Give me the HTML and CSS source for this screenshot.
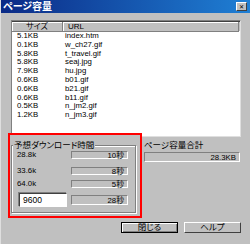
FILE: index.html
```
<!DOCTYPE html>
<html lang="ja">

<head>
    <meta charset="UTF-8">
    <title>ページ容量</title>
    <link rel="stylesheet" href="styles.css">
</head>

<body>
    <div class="dialog">
        <!-- タイトルバー -->
        <div class="titlebar">
            <span class="title">ページ容量</span>
            <span class="close-btn">&#x2715;</span>
        </div>

        <!-- ファイル一覧 -->
        <div class="list">
            <div class="list-head">
                <div class="head-cell size-col">サイズ</div>
                <div class="head-cell url-col">URL</div>
            </div>
            <div class="list-body">
                <div class="row"><span class="size-col">5.1KB</span><span>index.htm</span></div>
                <div class="row"><span class="size-col">0.1KB</span><span>w_ch27.gif</span></div>
                <div class="row"><span class="size-col">5.8KB</span><span>t_travel.gif</span></div>
                <div class="row"><span class="size-col">5.8KB</span><span>seaj.jpg</span></div>
                <div class="row"><span class="size-col">7.9KB</span><span>hu.jpg</span></div>
                <div class="row"><span class="size-col">0.6KB</span><span>b01.gif</span></div>
                <div class="row"><span class="size-col">0.6KB</span><span>b21.gif</span></div>
                <div class="row"><span class="size-col">0.6KB</span><span>b11.gif</span></div>
                <div class="row"><span class="size-col">0.5KB</span><span>n_jm2.gif</span></div>
                <div class="row"><span class="size-col">1.2KB</span><span>n_jm3.gif</span></div>
            </div>
        </div>

        <div class="lower">
            <!-- 赤枠 (注釈) -->
            <div class="mark"></div>

            <div class="group">
                <div class="group-title">予想ダウンロード時間</div>
                <div class="speed-row r1">
                    <span class="speed">28.8k</span>
                    <span class="field">10秒</span>
                </div>
                <div class="speed-row r2">
                    <span class="speed">33.6k</span>
                    <span class="field">8秒</span>
                </div>
                <div class="speed-row r3">
                    <span class="speed">64.0k</span>
                    <span class="field">5秒</span>
                </div>
                <div class="speed-row r4">
                    <span class="input">9600</span>
                    <span class="field tall">28秒</span>
                </div>
            </div>

            <div class="total">
                <div class="total-label">ページ容量合計</div>
                <div class="field total-box">28.3KB</div>
            </div>
        </div>

        <div class="buttons">
            <div class="btn default">閉じる</div>
            <div class="btn">ヘルプ</div>
        </div>
    </div>
</body>

</html>
```

FILE: styles.css
```
* {
    box-sizing: border-box;
}

body {
    margin: 0;
    background: #c0c0c0;
    font-family: "Liberation Sans", "Noto Sans CJK JP", sans-serif;
    font-feature-settings: "palt";
    color: #000;
}

.dialog {
    position: relative;
    width: 250px;
    height: 244px;
    background: #c0c0c0;
    border-left: 1px solid #dfdfdf;
    overflow: hidden;
}

/* タイトルバー */
.titlebar {
    display: flex;
    align-items: center;
    height: 13px;
    margin-left: -1px;
    padding-left: 3px;
    background: linear-gradient(90deg, #0b2a86, #1f7fd4);
}

.title {
    color: #fff;
    font-size: 10px;
    font-weight: bold;
    line-height: 13px;
}

.close-btn {
    margin-left: auto;
    margin-right: 3px;
    width: 11px;
    height: 9px;
    background: #c0c0c0;
    border-top: 1px solid #fff;
    border-left: 1px solid #fff;
    border-right: 1px solid #404040;
    border-bottom: 1px solid #404040;
    font-family: "DejaVu Sans", sans-serif;
    font-size: 6px;
    font-weight: bold;
    line-height: 7px;
    text-align: center;
}

/* 一覧 */
.list {
    margin: 7px 0 0 10px;
    width: 230px;
    height: 117px;
    background: #fff;
    border-top: 1px solid #808080;
    border-left: 1px solid #808080;
    border-right: 1px solid #dfdfdf;
    border-bottom: 1px solid #dfdfdf;
    font-size: 7.8px;
}

.list-head {
    display: flex;
    height: 10px;
    background: #c0c0c0;
    border-top: 1px solid #404040;
}

.head-cell {
    height: 10px;
    line-height: 9px;
    font-size: 8px;
    border-right: 1px solid #808080;
    border-bottom: 1px solid #808080;
    box-shadow: inset 1px 1px 0 #fff;
}

.head-cell.size-col {
    width: 51px;
    text-align: center;
}

.head-cell.url-col {
    flex: 1;
    padding-left: 5px;
    margin-right: 1px;
}

.list-body {
    padding: 1px 0 0 5px;
}

.row {
    display: flex;
    height: 8.8px;
    line-height: 8.8px;
    white-space: nowrap;
}

.row .size-col {
    width: 48px;
}

/* 下段 */
.lower {
    display: flex;
    padding-left: 10px;
}

.mark {
    position: absolute;
    left: 7px;
    top: 133px;
    width: 134px;
    height: 85px;
    border: 2px solid #ff0000;
    background: #c0c0c0;
}

.group {
    position: relative;
    width: 125px;
    height: 68px;
    margin-top: 8px;
    padding: 0 0 0 5px;
    border: 1px solid #808080;
    box-shadow: 1px 1px 0 #fff, inset 1px 1px 0 #fff;
    font-size: 7.8px;
}

.group-title {
    width: fit-content;
    height: 9px;
    margin: -5px 0 0 -4px;
    padding: 0 1px;
    background: #c0c0c0;
    font-size: 8.5px;
    line-height: 9px;
    white-space: nowrap;
}

.speed-row {
    display: flex;
    align-items: center;
    height: 8px;
}

.speed-row.r1 {
    margin-top: 1px;
}

.speed-row.r2 {
    margin-top: 8px;
}

.speed-row.r3 {
    margin-top: 5px;
}

.speed-row.r4 {
    margin-top: 5px;
    height: 14px;
}

.speed {
    width: 54px;
    line-height: 8px;
}

.field {
    display: block;
    width: 57px;
    height: 8px;
    padding-right: 3px;
    border-top: 1px solid #808080;
    border-left: 1px solid #808080;
    border-right: 1px solid #fff;
    border-bottom: 1px solid #fff;
    text-align: right;
    font-size: 7.8px;
    line-height: 7px;
}

.field.tall {
    height: 10px;
    line-height: 9px;
}

.input {
    width: 48px;
    height: 14px;
    margin: 0 4px 0 2px;
    padding-left: 3px;
    background: #fff;
    border-top: 1px solid #404040;
    border-left: 1px solid #404040;
    border-right: 1px solid #fff;
    border-bottom: 1px solid #fff;
    box-shadow: -1px -1px 0 #808080;
    font-size: 8.5px;
    line-height: 12px;
}

.total {
    margin-left: 8px;
    width: 96px;
}

.total-label {
    margin-top: 4px;
    height: 9px;
    font-size: 8.5px;
    line-height: 9px;
    white-space: nowrap;
}

.total-box {
    width: 96px;
    height: 10px;
    margin-top: 2px;
    line-height: 9px;
}

/* ボタン */
.buttons {
    display: flex;
    justify-content: flex-end;
    gap: 6px;
    margin-top: 9px;
    padding-right: 9px;
}

.btn {
    width: 57px;
    height: 11px;
    border-top: 1px solid #fff;
    border-left: 1px solid #fff;
    border-right: 1px solid #404040;
    border-bottom: 1px solid #404040;
    text-align: center;
    font-size: 8.5px;
    line-height: 9px;
}

.btn.default {
    border: 1px solid #000;
    box-shadow: inset 1px 1px 0 #fff, inset -1px -1px 0 #808080;
}
```
